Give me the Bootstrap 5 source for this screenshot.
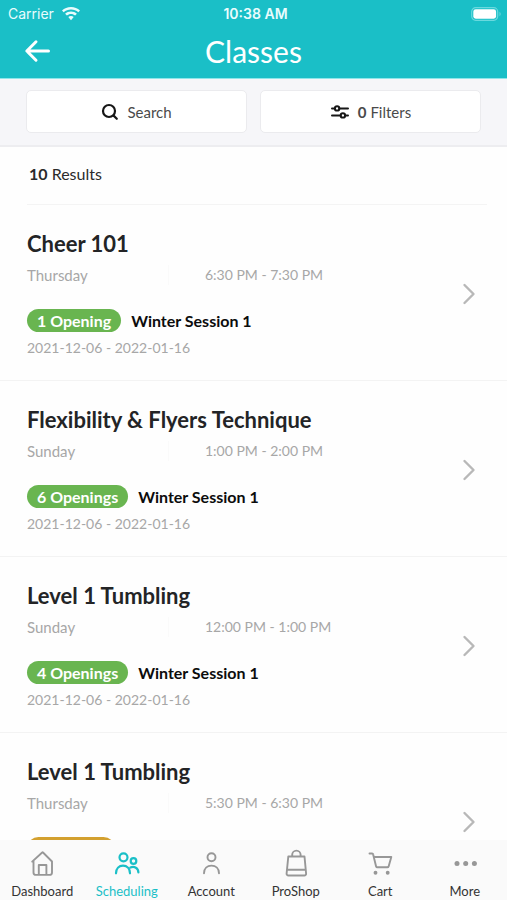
<!DOCTYPE html>
<html lang="en">
<head>
<meta charset="utf-8">
<meta name="viewport" content="width=device-width, initial-scale=1">
<title>Classes</title>
<link href="https://cdn.jsdelivr.net/npm/bootstrap@5.3.0/dist/css/bootstrap.min.css" rel="stylesheet">
<style>
body { font-family: Lato, "Liberation Sans", sans-serif; font-size: 15px; line-height: 20px; color: #2b2b2b; background: #fefefe; }
svg { display: block; fill: none; stroke: currentColor; stroke-linecap: round; stroke-linejoin: round; }
.app-header { background: #1abfc7; color: #fff; border-bottom: 1px solid #8fe6ea; }
.status-bar { height: 28px; font-family: Inter, "Liberation Sans", sans-serif; font-size: 14px; color: #e9fcfd; }
.status-bar svg { fill: currentColor; stroke: none; }
.title-bar { height: 50px; padding: 0 24px 4px; }
.title-bar h1 { font-size: 30px; line-height: 36px; }
.back-btn { color: #fff; }
.filter-bar { background: #f6f6f9; border-bottom: 2px solid #ededf0; padding: 11px 26px 12px; gap: 13px; }
.filter-btn { height: 43px; background: #fff; border: 1px solid #ebebee; border-radius: 5px; color: #4a4a4a; font-size: 15px; line-height: 20px; }
.filter-btn svg { color: #161616; }
.results { margin: 0 20px 0 27px; padding: 17px 2px 20px; border-bottom: 1px solid #f4f4f4; font-size: 16px; }
.list-area { scrollbar-width: none; }
.class-item { min-height: 176px; padding: 24px 27px 22px; border-bottom: 1px solid #f3f3f3; color: #2b2b2b; }
.class-item h2 { font-size: 22px; line-height: 30px; color: #232426; margin-bottom: 6px; }
.soft { color: #a7a7a7; }
.time, .dates { font-size: 14px; }
.day { flex: 0 0 142px; margin-right: 36px; border-right: 1px solid #fafafa; }
.session { margin: 24px 0 6px; gap: 10px; min-height: 23px; color: #0c0c0c; font-size: 16px; line-height: 23px; }
.pill { min-width: 88px; background: #69b550; color: #fff; padding: 0 10px; }
.pill-wait { background: #d3a02f; }
.chevron { color: #b8b8b8; }
.tab-bar { background: #fafafa; height: 60px; }
.tab-link { color: #333; font-size: 13px; line-height: 16px; padding-top: 9px; gap: 4px; }
.tab-link svg { color: #979797; }
.tab-link.active, .tab-link.active svg { color: #1abfc7; }
</style>
</head>
<body>
<div class="d-flex flex-column vh-100">
  <header class="app-header flex-shrink-0">
    <div class="status-bar row g-0 align-items-center">
      <div class="col d-flex align-items-center gap-2 ps-2"><span>Carrier</span>
        <svg width="18" height="14" viewBox="0 0 18 14" aria-hidden="true"><path d="M9 0C5.500 0 2.300 1.300 0 3.500L1.700 5.300C3.600 3.500 6.200 2.500 9 2.500s5.400 1 7.300 2.800L18 3.500C15.700 1.300 12.500 0 9 0zM9 4.500c-2.300 0-4.300.8-5.900 2.300l1.800 1.800C6 7.600 7.400 7 9 7s3 .6 4.100 1.600l1.800-1.800C13.300 5.300 11.300 4.500 9 4.500zM9 8.900c-1 0-2 .4-2.700 1.100L9 13.200 11.700 10C11 9.300 10 8.900 9 8.900z"/></svg>
      </div>
      <div class="col text-center fw-semibold">10:38 AM</div>
      <div class="col d-flex justify-content-end pe-1">
        <svg width="32" height="14" viewBox="0 0 32 14" aria-hidden="true"><rect x=".7" y=".7" width="26" height="12.600" rx="4" fill="none" stroke="#6ad9de" stroke-width="1.200"/><rect x="2.300" y="2.300" width="22.800" height="9.400" rx="2.400" fill="#fff"/><path d="M28.500 4.800c1.600.7 1.600 3.700 0 4.400z" fill="#6ad9de"/></svg>
      </div>
    </div>
    <div class="title-bar row g-0 align-items-center">
      <div class="col-2"><button type="button" class="btn p-0 border-0 back-btn" aria-label="Back"><svg width="27" height="24" viewBox="0 0 27 24" stroke-width="3"><path d="M24.500 12H3M12 2.800L2.800 12l9.200 9.200"/></svg></button></div>
      <h1 class="col-8 text-center fw-normal mb-0">Classes</h1>
    </div>
  </header>

  <div class="filter-bar d-flex flex-shrink-0">
    <button type="button" class="btn filter-btn flex-fill w-50 d-flex align-items-center justify-content-center p-0 gap-2"><svg width="18" height="18" viewBox="0 0 18 18" stroke-width="2.200" aria-hidden="true"><circle cx="8" cy="8" r="6"/><path d="M12.600 12.600l3.200 3.200"/></svg>Search</button>
    <button type="button" class="btn filter-btn flex-fill w-50 d-flex align-items-center justify-content-center p-0 gap-2"><svg width="20" height="16" viewBox="0 0 20 16" stroke-width="2" aria-hidden="true"><path d="M2 4.400h2.800M9.400 4.400H18M2 11.400h8.600M15.200 11.400H18"/><circle cx="7.100" cy="4.400" r="2.200"/><circle cx="12.900" cy="11.400" r="2.200"/></svg><span><b>0</b> Filters</span></button>
  </div>

  <main class="list-area flex-fill overflow-auto">
    <div class="results"><b>10</b> Results</div>

    <a href="#" class="class-item d-flex text-decoration-none">
      <div class="flex-fill">
        <h2 class="fw-bold">Cheer 101</h2>
        <div class="d-flex soft"><span class="day">Thursday</span><span class="time">6:30 PM - 7:30 PM</span></div>
        <div class="session d-flex fw-bold"><span class="pill rounded-pill">1 Opening</span><span>Winter Session 1</span></div>
        <div class="soft dates">2021-12-06 - 2022-01-16</div>
      </div>
      <svg class="chevron flex-shrink-0 align-self-center" width="22" height="22" viewBox="0 0 22 22" stroke-width="2.400" aria-hidden="true"><path d="M6.500 2l9 9-9 9"/></svg>
    </a>

    <a href="#" class="class-item d-flex text-decoration-none">
      <div class="flex-fill">
        <h2 class="fw-bold">Flexibility &amp; Flyers Technique</h2>
        <div class="d-flex soft"><span class="day">Sunday</span><span class="time">1:00 PM - 2:00 PM</span></div>
        <div class="session d-flex fw-bold"><span class="pill rounded-pill">6 Openings</span><span>Winter Session 1</span></div>
        <div class="soft dates">2021-12-06 - 2022-01-16</div>
      </div>
      <svg class="chevron flex-shrink-0 align-self-center" width="22" height="22" viewBox="0 0 22 22" stroke-width="2.400" aria-hidden="true"><path d="M6.500 2l9 9-9 9"/></svg>
    </a>

    <a href="#" class="class-item d-flex text-decoration-none">
      <div class="flex-fill">
        <h2 class="fw-bold">Level 1 Tumbling</h2>
        <div class="d-flex soft"><span class="day">Sunday</span><span class="time">12:00 PM - 1:00 PM</span></div>
        <div class="session d-flex fw-bold"><span class="pill rounded-pill">4 Openings</span><span>Winter Session 1</span></div>
        <div class="soft dates">2021-12-06 - 2022-01-16</div>
      </div>
      <svg class="chevron flex-shrink-0 align-self-center" width="22" height="22" viewBox="0 0 22 22" stroke-width="2.400" aria-hidden="true"><path d="M6.500 2l9 9-9 9"/></svg>
    </a>

    <a href="#" class="class-item d-flex text-decoration-none">
      <div class="flex-fill">
        <h2 class="fw-bold">Level 1 Tumbling</h2>
        <div class="d-flex soft"><span class="day">Thursday</span><span class="time">5:30 PM - 6:30 PM</span></div>
        <div class="session d-flex"><span class="pill pill-wait rounded-pill"></span></div>
      </div>
      <svg class="chevron flex-shrink-0 align-self-center" width="22" height="22" viewBox="0 0 22 22" stroke-width="2.400" aria-hidden="true"><path d="M6.500 2l9 9-9 9"/></svg>
    </a>
  </main>

  <nav class="tab-bar row g-0 flex-shrink-0" aria-label="Main">
    <a href="#" class="tab-link col d-flex flex-column align-items-center text-decoration-none"><svg width="28" height="30" viewBox="0 0 28 30" stroke-width="1.900" aria-hidden="true"><path d="M5.500 12v11.400a2.500 2.500 0 0 0 2.500 2.500h13.500a2.500 2.500 0 0 0 2.500-2.500V12.500L15 3.500a.6.6 0 0 0-.8 0L4.200 12.600M10.800 25.500V16h7.600v9.500"/></svg><span>Dashboard</span></a>
    <a href="#" class="tab-link active col d-flex flex-column align-items-center text-decoration-none" aria-current="page"><svg width="28" height="30" viewBox="0 0 28 30" stroke-width="2.200" aria-hidden="true"><circle cx="10.500" cy="8.300" r="4"/><circle cx="20.500" cy="12" r="2.800"/><path d="M3 24.300c0-4.700 3-7.700 7-7.700s7 3 7 7.700M17.400 18.500c4-1.900 8 .8 8 5"/></svg><span>Scheduling</span></a>
    <a href="#" class="tab-link col d-flex flex-column align-items-center text-decoration-none"><svg width="28" height="30" viewBox="0 0 28 30" stroke-width="1.900" aria-hidden="true"><circle cx="14.500" cy="8.300" r="4"/><path d="M7 24.300c0-4.700 3.200-7.700 7.500-7.700s7.500 3 7.500 7.700"/></svg><span>Account</span></a>
    <a href="#" class="tab-link col d-flex flex-column align-items-center text-decoration-none"><svg width="28" height="30" viewBox="0 0 28 30" stroke-width="1.900" aria-hidden="true"><path d="M6.300 7.500h16.200l1.600 17c.1 1.200-.6 2-1.800 2H6.500c-1.200 0-2-.8-1.900-2zM5 20.800h18.500M10.200 7.200V5.800a4.200 4.200 0 0 1 8.400 0v1.400"/></svg><span>ProShop</span></a>
    <a href="#" class="tab-link col d-flex flex-column align-items-center text-decoration-none"><svg width="28" height="30" viewBox="0 0 28 30" stroke-width="1.900" aria-hidden="true"><path d="M3.500 4.500h2.600c.5 0 .9.300 1 .8l3 12.100c.2.600.6.900 1.200.9h10.100c.6 0 1-.3 1.200-.9L25.300 8H7.900"/><circle cx="9.500" cy="23.700" r="1" fill="currentColor"/><circle cx="21.700" cy="23.700" r="1" fill="currentColor"/></svg><span>Cart</span></a>
    <a href="#" class="tab-link col d-flex flex-column align-items-center text-decoration-none"><svg width="28" height="30" viewBox="0 0 28 30" aria-hidden="true"><g fill="currentColor" stroke="none"><circle cx="6" cy="14.500" r="2.500"/><circle cx="14.700" cy="14.500" r="2.500"/><circle cx="23.400" cy="14.500" r="2.500"/></g></svg><span>More</span></a>
  </nav>
</div>
<script src="https://cdn.jsdelivr.net/npm/bootstrap@5.3.0/dist/js/bootstrap.bundle.min.js"></script>
</body>
</html>
